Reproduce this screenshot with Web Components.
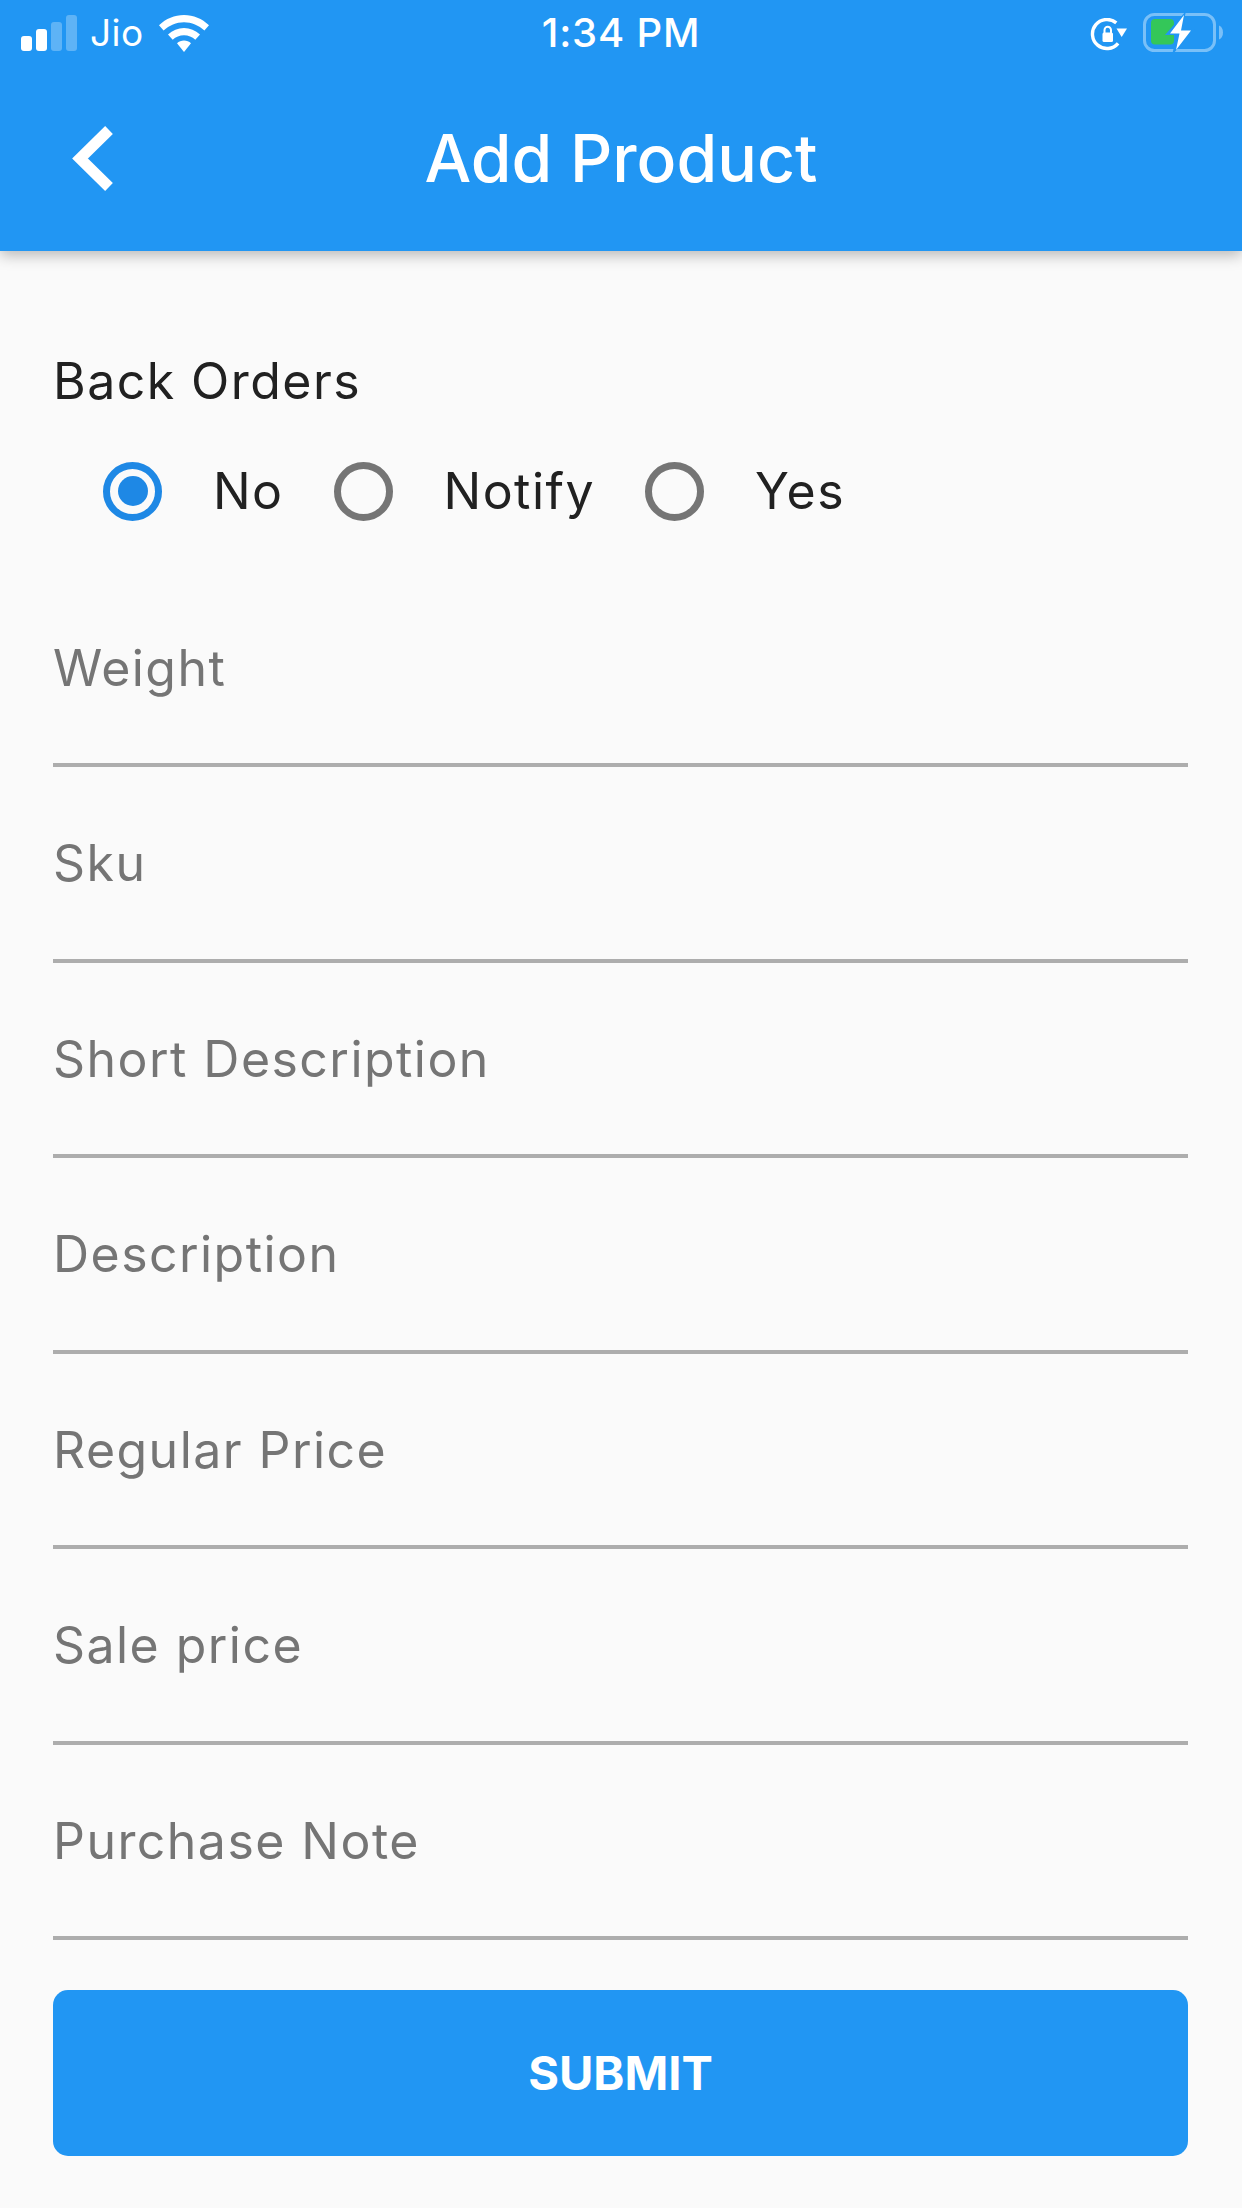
<!DOCTYPE html>
<html>
<head>
<meta charset="utf-8">
<title>Add Product</title>
<style>
html, body { margin: 0; padding: 0; background: #fafafa; }
body { font-family: Inter, Roboto, "Liberation Sans", sans-serif; width: 1242px; height: 2208px; overflow: hidden; }
</style>
</head>
<body>
<add-product-page></add-product-page>
<script>
class StatusBar extends HTMLElement {
    constructor() {
        super();
        this.attachShadow({ mode: 'open' }).innerHTML = `
            <style>
                :host { display: flex; align-items: flex-start; justify-content: space-between; height: 66px; color: #fff; position: relative; }
                .left { display: flex; align-items: flex-start; padding: 15px 0 0 21px; }
                .left .carrier { font-size: 37px; line-height: 36px; margin: 0 16px 0 13px; letter-spacing: 0.4px; font-weight: 400; }
                .time { position: absolute; left: 0; right: 0; top: 13px; text-align: center; font-size: 40px; line-height: 40px; font-weight: 500; letter-spacing: 0.8px; }
                .right { display: flex; align-items: flex-start; padding: 13px 18px 0 0; }
                svg { display: block; }
            </style>
            <div class="left">
                <svg width="56" height="36" viewBox="0 0 56 36">
                    <rect x="0" y="21" width="11" height="15" rx="3" fill="#fff"/>
                    <rect x="15" y="14" width="11" height="22" rx="3" fill="#fff"/>
                    <rect x="30" y="7" width="11" height="29" rx="3" fill="#fff" fill-opacity=".28"/>
                    <rect x="45" y="0" width="11" height="36" rx="3" fill="#fff" fill-opacity=".28"/>
                </svg>
                <span class="carrier">Jio</span>
                <svg width="50" height="38" viewBox="0 0 50 38">
                    <path d="M25 0C15.500 0 7 3.700 0 10.200L4.600 15.600C10.200 10.300 17.300 7.200 25 7.200S39.800 10.300 45.400 15.600L50 10.200C43 3.700 34.500 0 25 0Z" fill="#fff"/>
                    <path d="M25 13C19 13 13.600 15.300 9 19.400L13.700 24.800C16.800 22 20.700 20.300 25 20.300S33.200 22 36.300 24.800L41 19.400C36.400 15.300 31 13 25 13Z" fill="#fff"/>
                    <path d="M25 25.500C22.300 25.500 19.900 26.500 18 28.200L25 37L32 28.200C30.100 26.500 27.700 25.500 25 25.500Z" fill="#fff"/>
                </svg>
            </div>
            <span class="time">1:34 PM</span>
            <div class="right">
                <svg width="37" height="36" viewBox="0 0 37 36" style="margin:5px 16px 0 0">
                    <path d="M28.100 25.300A14.500 14.500 0 1 1 26.300 4.900" fill="none" stroke="#fff" stroke-width="3.400"/>
                    <path d="M26.500 10.500H37L31.700 19Z" fill="#fff"/>
                    <rect x="12.500" y="14.500" width="10.500" height="9.500" rx="1.500" fill="#fff"/>
                    <path d="M14.500 15V12A3.200 3.200 0 0 1 21 12V15" fill="none" stroke="#fff" stroke-width="2"/>
                </svg>
                <svg width="81" height="40" viewBox="0 0 81 40">
                    <rect x="1.500" y="1.500" width="70" height="36" rx="10" fill="none" stroke="#fff" stroke-opacity=".4" stroke-width="3"/>
                    <path d="M76 12.500C78.500 13.500 80 16 80 19.500S78.500 25.500 76 26.500Z" fill="#fff" fill-opacity=".4"/>
                    <rect x="8" y="6" width="23" height="25.500" rx="4" fill="#34c759"/>
                    <path d="M43 -2L22 22H34L29 42L52 16H39Z" fill="#2196f3"/>
                    <path d="M41 2L27 20.500H36.500L33 37L48 17.500H38Z" fill="#fff"/>
                </svg>
            </div>
        `;
    }
}
customElements.define('status-bar', StatusBar);

class AppBar extends HTMLElement {
    constructor() {
        super();
        this.attachShadow({ mode: 'open' }).innerHTML = `
            <style>
                :host { display: block; height: 251px; background: #2196f3; box-shadow: 0 4px 14px rgba(0,0,0,.28); position: relative; z-index: 1; }
                .toolbar { display: flex; align-items: center; justify-content: center; height: 185px; position: relative; }
                .back { position: absolute; left: 70px; top: 56px; display: block; }
                .title { color: #fff; font-size: 66px; font-weight: 550; line-height: 70px; margin-top: -2px; }
            </style>
            <status-bar></status-bar>
            <div class="toolbar">
                <svg class="back" width="46" height="72" viewBox="0 0 46 72">
                    <path d="M39 8L10 36.500L39 65" fill="none" stroke="#fff" stroke-width="11" stroke-linejoin="miter"/>
                </svg>
                <span class="title"><slot></slot></span>
            </div>
        `;
    }
}
customElements.define('app-bar', AppBar);

class RadioOption extends HTMLElement {
    constructor() {
        super();
        this.attachShadow({ mode: 'open' }).innerHTML = `
            <style>
                :host { display: flex; align-items: center; gap: 51px; color: #212121; font-size: 50px; line-height: 60px; letter-spacing: 1.450px; }
                .ring { width: 59px; height: 59px; box-sizing: border-box; border: 7px solid #757575; border-radius: 50%; display: flex; align-items: center; justify-content: center; }
                :host([checked]) .ring { border-color: #1e88e5; }
                :host([checked]) .ring::after { content: ""; width: 30px; height: 30px; border-radius: 50%; background: #1e88e5; }
            </style>
            <span class="ring"></span>
            <span><slot></slot></span>
        `;
    }
}
customElements.define('radio-option', RadioOption);

class RadioGroup extends HTMLElement {
    constructor() {
        super();
        this.attachShadow({ mode: 'open' }).innerHTML = `
            <style>
                :host { display: block; font-size: 50px; color: #212121; letter-spacing: 1.450px; }
                .label { line-height: 60px; padding: 100px 0 0 53px; }
                .options { display: flex; align-items: center; gap: 50px; padding: 50px 0 0 103px; }
            </style>
            <div class="label"></div>
            <div class="options"><slot></slot></div>
        `;
        this.shadowRoot.querySelector('.label').textContent = this.getAttribute('label');
    }
}
customElements.define('radio-group', RadioGroup);

class TextField extends HTMLElement {
    constructor() {
        super();
        this.attachShadow({ mode: 'open' }).innerHTML = `
            <style>
                :host { display: flex; align-items: flex-end; height: 195.500px; box-sizing: border-box; margin: 0 54px 0 53px; border-bottom: 4px solid #adadad; color: #757575; font-size: 50px; line-height: 60px; padding-bottom: 65.500px; letter-spacing: 1.450px; }
            </style>
            <slot></slot>
        `;
    }
}
customElements.define('text-field', TextField);

class SubmitButton extends HTMLElement {
    constructor() {
        super();
        this.attachShadow({ mode: 'open' }).innerHTML = `
            <style>
                :host { display: flex; align-items: center; justify-content: center; height: 166px; margin: 49.500px 54px 0 53px; border-radius: 15px; background: #2196f3; color: #fff; font-size: 47px; font-weight: 700; }
            </style>
            <slot></slot>
        `;
    }
}
customElements.define('submit-button', SubmitButton);

class AddProductPage extends HTMLElement {
    constructor() {
        super();
        this.attachShadow({ mode: 'open' }).innerHTML = `
            <style>
                :host { display: block; background: #fafafa; height: 2208px; }
                .fields { padding-top: 50.500px; }
            </style>
            <app-bar>Add Product</app-bar>
            <div class="form">
                <radio-group label="Back Orders">
                    <radio-option checked>No</radio-option>
                    <radio-option>Notify</radio-option>
                    <radio-option>Yes</radio-option>
                </radio-group>
                <div class="fields">
                    <text-field>Weight</text-field>
                    <text-field>Sku</text-field>
                    <text-field>Short Description</text-field>
                    <text-field>Description</text-field>
                    <text-field>Regular Price</text-field>
                    <text-field>Sale price</text-field>
                    <text-field>Purchase Note</text-field>
                </div>
                <submit-button>SUBMIT</submit-button>
            </div>
        `;
    }
}
customElements.define('add-product-page', AddProductPage);
</script>
</body>
</html>
